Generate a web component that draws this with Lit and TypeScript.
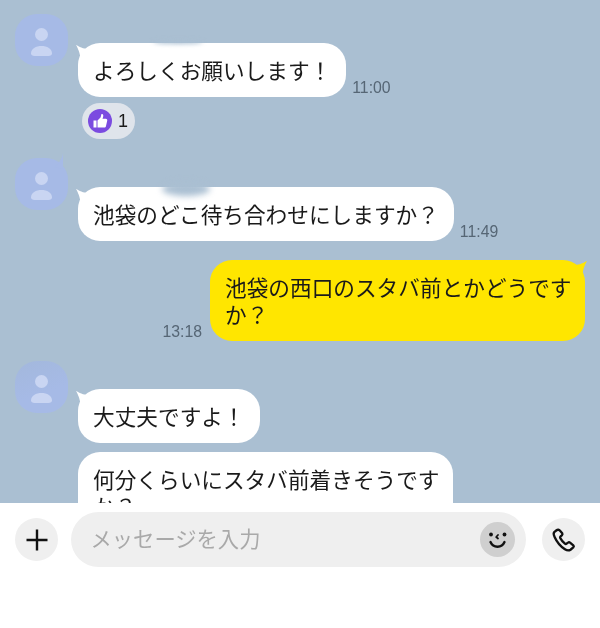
import { LitElement, html, css, svg } from "lit";
import { customElement } from "lit/decorators.js";

const avatar = (tail = false, fade = false) => html`
  <div class="avatar ${fade ? "fade" : ""}">
    ${tail ? html`<svg class="av-tail" width="10" height="16" viewBox="0 0 10 16"><path d="M9 0C8 6 5 10 0 14l9 2z" fill="#a6bae6" /></svg>` : ""}
    <svg width="53" height="53" viewBox="0 0 53 53">
      <circle cx="26.5" cy="20.5" r="6.5" fill="#c9d5f2" />
      <path d="M16 40c0-5 5-7.500 10.500-7.500S37 35 37 40c0 1.500-1.500 2.500-3.500 2.500h-14C17.500 42.500 16 41.500 16 40z" transform="translate(0 -.5)" fill="#c9d5f2" />
    </svg>
  </div>
`;

const leftTail = svg`<path d="M0 0C3 1.500 7 4 13 4L10 16 5 16C4 9 3 5 0 0z" fill="#fff" />`;
const rightTail = svg`<path d="M13 0C10 1.500 6 4 0 4L3 16 8 16C9 9 10 5 13 0z" fill="#ffe600" />`;

@customElement("app-root")
export class AppRoot extends LitElement {
  static styles = css`
    :host {
      display: block;
      width: 600px;
      height: 628px;
      overflow: hidden;
      background: #fff;
      font-family: "Noto Sans CJK JP", "Liberation Sans", sans-serif;
      color: #1a1a1a;
    }
    .chat {
      height: 503px;
      box-sizing: border-box;
      overflow: hidden;
      background: #aabfd2;
      padding: 14px 15px 0;
      display: flex;
      flex-direction: column;
      gap: 19px;
      filter: blur(0.3px);
    }
    .row {
      display: flex;
      gap: 10px;
      flex: none;
    }
    .row.third {
      margin-top: 1px;
    }
    .avatar {
      position: relative;
      flex: none;
      width: 53px;
      height: 52px;
      border-radius: 22px;
      background: #a6bae6;
    }
    .avatar > svg:last-child {
      display: block;
    }
    .av-tail {
      position: absolute;
      top: -5px;
      right: 4px;
    }
    .fade {
      background: linear-gradient(160deg, #a3b8dc 0%, #a6bae6 60%);
    }
    .col {
      display: flex;
      flex-direction: column;
      align-items: flex-start;
      padding-top: 29px;
    }
    .line {
      display: flex;
      align-items: flex-end;
      gap: 6px;
    }
    .bubble {
      position: relative;
      background: #fff;
      border-radius: 22px;
      box-sizing: border-box;
      padding: 13px 12px 14px 15px;
      font-size: 21.67px;
      line-height: 27px;
    }
    .auto {
      padding-right: 15px;
    }
    .tail {
      position: absolute;
      top: 2px;
      left: -2px;
    }
    .time {
      font-family: "Liberation Sans", sans-serif;
      font-size: 15.800px;
      line-height: 18px;
      color: #566675;
    }
    .smudge {
      position: absolute;
      top: -3px;
      left: 75px;
      width: 50px;
      height: 4px;
      border-radius: 50%;
      background: #aabfd2;
      filter: blur(2px);
    }
    .smudge.big {
      top: -5px;
      left: 84px;
      width: 48px;
      height: 14px;
      filter: blur(3px);
    }
    .reaction {
      display: flex;
      align-items: center;
      gap: 6px;
      width: 53px;
      height: 36px;
      box-sizing: border-box;
      margin: 6px 0 0 4px;
      padding: 0 6px;
      border-radius: 18px;
      background: #dfe4eb;
      font-family: "Liberation Sans", sans-serif;
      font-size: 18px;
    }
    .reaction svg {
      display: block;
      flex: none;
    }
    .outgoing {
      align-self: flex-end;
      display: flex;
      align-items: flex-end;
      gap: 8px;
    }
    .outgoing .bubble {
      width: 375px;
      background: #ffe600;
    }
    .outgoing .tail {
      left: auto;
      right: -2px;
      top: 1px;
    }
    .stack {
      gap: 9px;
      padding-top: 28px;
    }
    .wide {
      width: 375px;
    }
    .footer {
      height: 125px;
      box-sizing: border-box;
      padding: 9px 15px 0;
      display: flex;
      align-items: flex-start;
      gap: 13px;
      filter: blur(0.3px);
    }
    .round {
      flex: none;
      width: 43px;
      height: 43px;
      margin-top: 6px;
      border-radius: 50%;
      background: #efefef;
      display: flex;
      align-items: center;
      justify-content: center;
    }
    .round.last {
      margin-left: 3px;
    }
    .input {
      flex: 1;
      height: 55px;
      border-radius: 28px;
      background: #efefef;
      display: flex;
      align-items: center;
      justify-content: space-between;
      padding: 0 11px 0 19.500px;
      font-size: 21.300px;
      color: #a9a9a9;
    }
    .placeholder {
      line-height: 27px;
      margin-top: -4px;
    }
    .smile {
      width: 35px;
      height: 35px;
      border-radius: 50%;
      background: #cfcfcf;
    }
    .smile svg {
      display: block;
    }
  `;

  render() {
    return html`
      <div class="chat">
        <div class="row">
          ${avatar()}
          <div class="col">
            <div class="line">
              <div class="bubble auto">
                <div class="smudge"></div>
                <svg class="tail" width="13" height="16" viewBox="0 0 13 16">${leftTail}</svg>
                よろしくお願いします！
              </div>
              <span class="time">11:00</span>
            </div>
            <div class="reaction">
              <svg width="24" height="24" viewBox="0 0 24 24">
                <circle cx="12" cy="12" r="12" fill="#7b4be0" />
                <path d="M5.500 11.500h3v7h-3zM9.500 11.500l3-3c.5-.8.5-2 .8-3 .3-.8 2-.5 2 1.200 0 1-.4 2-.8 3h3.300c1.200 0 1.700 1 1.400 2l-1.200 5.300c-.2 1-.8 1.500-1.700 1.500H9.500z" fill="#fff" />
              </svg>
              1
            </div>
          </div>
        </div>

        <div class="row">
          ${avatar(true)}
          <div class="col">
            <div class="line">
              <div class="bubble auto">
                <div class="smudge big"></div>
                <svg class="tail" width="13" height="16" viewBox="0 0 13 16">${leftTail}</svg>
                池袋のどこ待ち合わせにしますか？
              </div>
              <span class="time">11:49</span>
            </div>
          </div>
        </div>

        <div class="outgoing">
          <span class="time">13:18</span>
          <div class="bubble">
            <svg class="tail" width="13" height="16" viewBox="0 0 13 16">${rightTail}</svg>
            池袋の西口のスタバ前とかどうですか？
          </div>
        </div>

        <div class="row third">
          ${avatar(false, true)}
          <div class="col stack">
            <div class="bubble auto">
              <svg class="tail" width="13" height="16" viewBox="0 0 13 16">${leftTail}</svg>
              大丈夫ですよ！
            </div>
            <div class="bubble wide">何分くらいにスタバ前着きそうですか？</div>
          </div>
        </div>
      </div>

      <div class="footer">
        <div class="round">
          <svg width="24" height="24" viewBox="0 0 24 24"><path d="M12 1.500v21M1.500 12h21" stroke="#111" stroke-width="2.400" fill="none" /></svg>
        </div>
        <div class="input">
          <span class="placeholder">メッセージを入力</span>
          <div class="smile">
            <svg width="35" height="35" viewBox="0 0 35 35" fill="none" stroke="#111">
              <circle cx="11" cy="12.500" r="1.900" fill="#111" stroke="none" />
              <circle cx="24.500" cy="12.500" r="1.900" fill="#111" stroke="none" />
              <path d="M18 13l-1.800 2 1.800 1.500" stroke-width="1.800" stroke-linecap="round" stroke-linejoin="round" />
              <path d="M10.500 20c1.500 3.500 4 4.700 7 4.700s5.500-1.200 7-4.700" stroke-width="2.400" stroke-linecap="round" />
            </svg>
          </div>
        </div>
        <div class="round last">
          <svg width="26" height="26" viewBox="0 0 28 28" fill="none" stroke="#111" stroke-width="2.500" stroke-linejoin="round">
            <path d="M6 3.500l-2.500 2C2.500 6.500 3 9 4 11c2.500 5.500 6.500 10 11 13 2 1.300 4.500 1.500 6 .5l3-2.500c.7-.7.7-1.500 0-2.200l-3.500-3c-.7-.6-1.500-.6-2.200 0l-1.500 1.200c-.6.5-1.200.5-1.800 0-2-1.600-3.700-3.700-5-6-.4-.7-.3-1.300.3-1.800l1.400-1.200c.7-.6.800-1.400.4-2.200L9.500 3.800C8.800 2.800 7 2.700 6 3.500z" />
          </svg>
        </div>
      </div>
    `;
  }
}
